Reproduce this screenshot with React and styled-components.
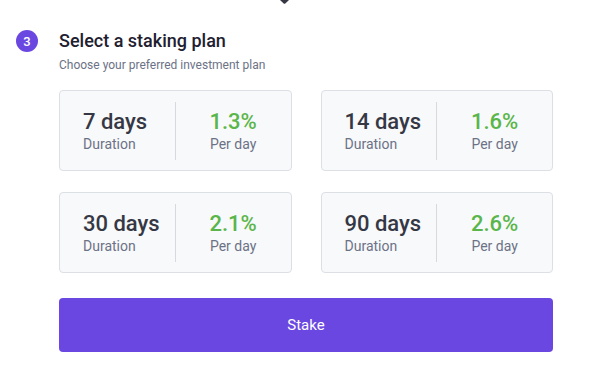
import React from "react";
import styled, { createGlobalStyle } from "styled-components";

const Global = createGlobalStyle`
  html, body { margin: 0; padding: 0; background: #ffffff; }
  body { font-family: Roboto, "Liberation Sans", sans-serif; -webkit-font-smoothing: antialiased; }
`;

const Page = styled.div`
  width: 604px;
  height: 378px;
  overflow: hidden;
  box-sizing: border-box;
  padding: 0 0 0 16px;
`;

const Connector = styled.div`
  height: 4px;
  margin-left: 264px;
  display: flex;
  align-items: flex-start;
  overflow: hidden;
`;

const Step = styled.div`
  display: grid;
  grid-template-columns: 22px 494px;
  column-gap: 21px;
  margin-top: 26px;
`;

const Badge = styled.div`
  width: 22px;
  height: 22px;
  border-radius: 50%;
  background: #6b47e1;
  color: #fff;
  font-size: 13px;
  font-weight: 500;
  display: flex;
  align-items: center;
  justify-content: center;
`;

const Content = styled.div`
  display: flex;
  flex-direction: column;
`;

const Title = styled.h2`
  margin: 0;
  font-size: 18px;
  line-height: 22px;
  font-weight: 500;
  color: #1e2030;
`;

const Subtitle = styled.p`
  margin: 6px 0 0;
  font-size: 12px;
  line-height: 15px;
  color: #6c7286;
`;

const PlanGrid = styled.div`
  display: grid;
  grid-template-columns: 1fr 1fr;
  column-gap: 29px;
  row-gap: 21px;
  margin-top: 17px;
`;

const Card = styled.div`
  height: 81px;
  box-sizing: border-box;
  border: 1px solid #dcdfe4;
  border-radius: 4px;
  background: #f8f9fb;
  display: grid;
  grid-template-columns: 1fr 1px 1fr;
  align-items: center;
`;

const Half = styled.div`
  display: flex;
  flex-direction: column;
  align-items: ${(p) => (p.$center ? "center" : "flex-start")};
  padding-left: ${(p) => (p.$center ? "0" : "23px")};
`;

const Divider = styled.div`
  width: 1px;
  height: 58px;
  background: #d6d9de;
`;

const Value = styled.div`
  font-size: 22px;
  line-height: 26px;
  font-weight: 500;
  color: ${(p) => (p.$green ? "#5ab64a" : "#353844")};
`;

const Label = styled.div`
  font-size: 14px;
  line-height: 17px;
  margin-top: 1px;
  color: #6c7286;
`;

const StakeButton = styled.button`
  margin-top: 25px;
  height: 54px;
  width: 100%;
  border: none;
  border-radius: 4px;
  background: #6b47e1;
  color: #ffffff;
  font-family: Roboto, "Liberation Sans", sans-serif;
  font-size: 15px;
  cursor: pointer;
`;

const plans = [
  { days: "7 days", rate: "1.3%" },
  { days: "14 days", rate: "1.6%" },
  { days: "30 days", rate: "2.1%" },
  { days: "90 days", rate: "2.6%" },
];

export default function App() {
  return (
    <>
      <Global />
      <Page>
        <Connector>
          <svg width="9" height="4" viewBox="0 0 9 4">
            <path d="M0 0 H9 L5.3 3.4 Q4.5 4.1 3.7 3.4 Z" fill="#353844" />
          </svg>
        </Connector>
        <Step>
          <Badge>3</Badge>
          <Content>
            <Title>Select a staking plan</Title>
            <Subtitle>Choose your preferred investment plan</Subtitle>
            <PlanGrid>
              {plans.map((p) => (
                <Card key={p.days}>
                  <Half>
                    <Value>{p.days}</Value>
                    <Label>Duration</Label>
                  </Half>
                  <Divider />
                  <Half $center>
                    <Value $green>{p.rate}</Value>
                    <Label>Per day</Label>
                  </Half>
                </Card>
              ))}
            </PlanGrid>
            <StakeButton>Stake</StakeButton>
          </Content>
        </Step>
      </Page>
    </>
  );
}
